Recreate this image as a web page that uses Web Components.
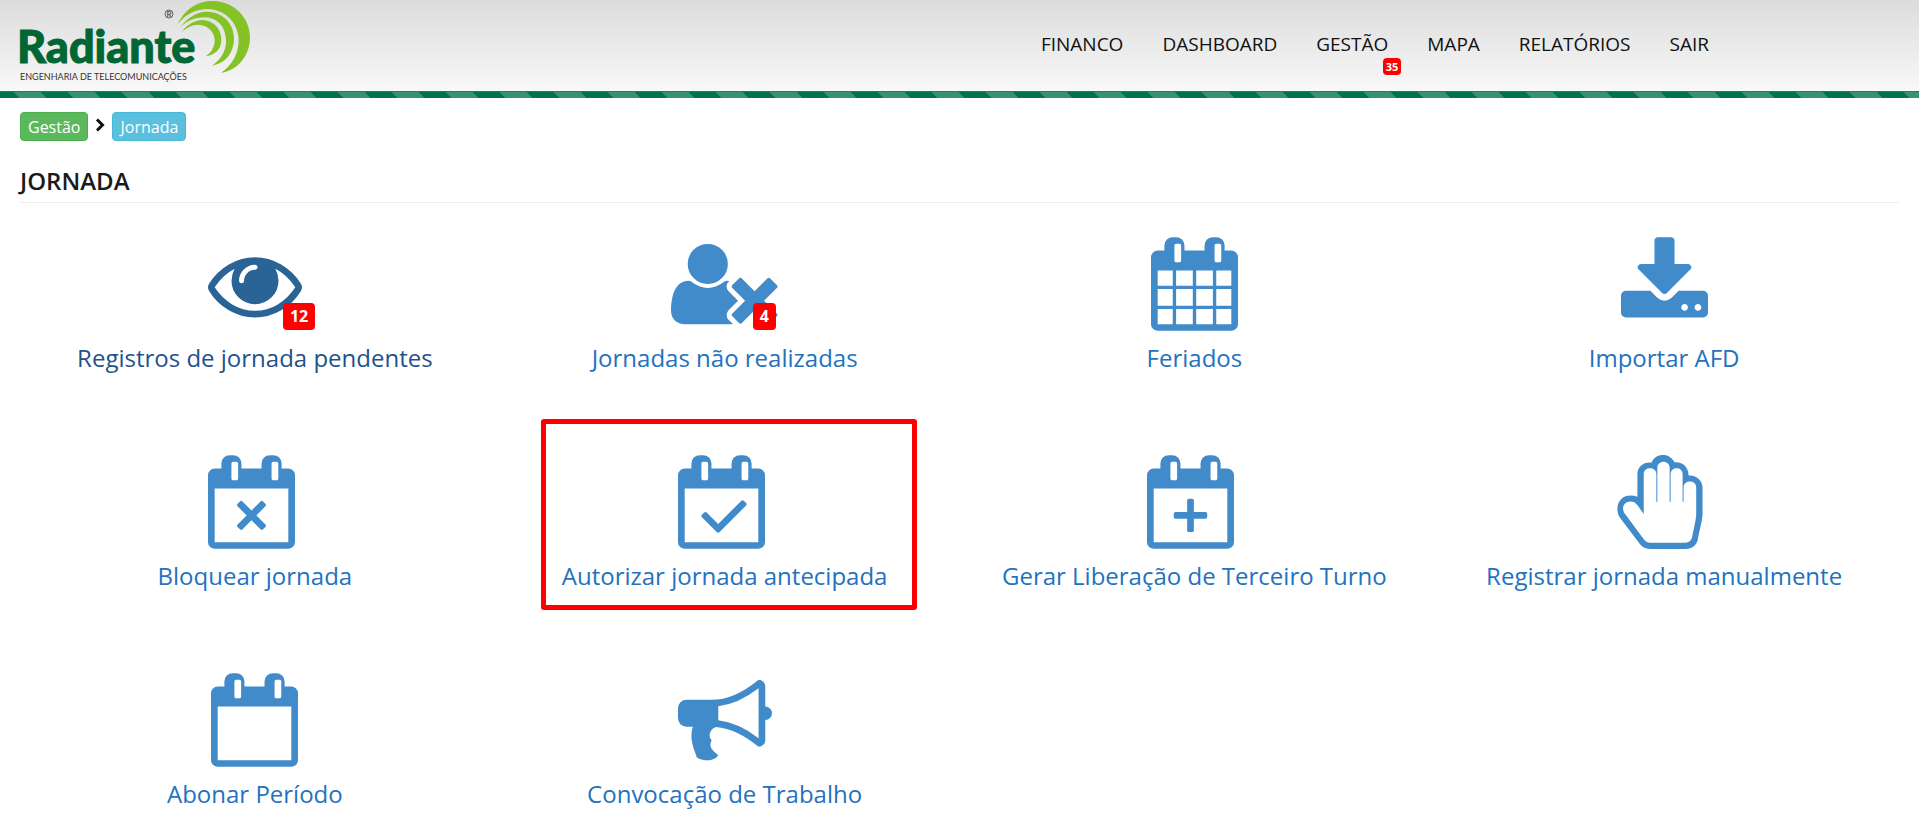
<!DOCTYPE html>
<html lang="pt-BR">
<head>
<meta charset="UTF-8">
<meta name="viewport" content="width=device-width, initial-scale=1.0">
<title>Jornada</title>
<style>
  body {
    margin: 0;
    background: #fff;
    color: #1a1a1a;
    font-family: "Open Sans", "Noto Sans", sans-serif;
  }
</style>
</head>
<body>
<app-header>
  <nav-item href="#financo">FINANCO</nav-item>
  <nav-item href="#dashboard">DASHBOARD</nav-item>
  <nav-item href="#gestao" badge="35">GESTÃO</nav-item>
  <nav-item href="#mapa">MAPA</nav-item>
  <nav-item href="#relatorios">RELATÓRIOS</nav-item>
  <nav-item href="#sair">SAIR</nav-item>
</app-header>

<app-page>
  <bread-crumb slot="crumbs">
    <crumb-link href="#gestao" kind="success">Gestão</crumb-link>
    <crumb-link href="#jornada" kind="info">Jornada</crumb-link>
  </bread-crumb>
  <span slot="title">JORNADA</span>

  <menu-card href="#pendentes" icon="eye" badge="12" active>Registros de jornada pendentes</menu-card>
  <menu-card href="#nao-realizadas" icon="user-times" badge="4">Jornadas não realizadas</menu-card>
  <menu-card href="#feriados" icon="calendar">Feriados</menu-card>
  <menu-card href="#importar" icon="download">Importar AFD</menu-card>
  <menu-card href="#bloquear" icon="calendar-times" spaced>Bloquear jornada</menu-card>
  <menu-card href="#autorizar" icon="calendar-check" spaced marked>Autorizar jornada antecipada</menu-card>
  <menu-card href="#terceiro-turno" icon="calendar-plus" spaced>Gerar Liberação de Terceiro Turno</menu-card>
  <menu-card href="#manual" icon="hand" spaced>Registrar jornada manualmente</menu-card>
  <menu-card href="#abonar" icon="calendar-empty">Abonar Período</menu-card>
  <menu-card href="#convocacao" icon="bullhorn">Convocação de Trabalho</menu-card>
</app-page>

<script>
const CAL_RINGS = "M640 448v-288q0-13-9.500-22.500t-22.500-9.500h-64q-13 0-22.500 9.500t-9.500 22.500v288q0 13 9.500 22.500t22.500 9.500h64q13 0 22.500-9.500t9.500-22.500zM1408 448v-288q0-13-9.500-22.500t-22.500-9.500h-64q-13 0-22.500 9.500t-9.500 22.500v288q0 13 9.500 22.500t22.500 9.500h64q13 0 22.500-9.500t9.500-22.500z";
// shared outline of every calendar: frame + ring holes
const CAL_FRAME = "M1728 384v1280q0 52-38 90t-90 38h-1408q-52 0-90-38t-38-90v-1280q0-52 38-90t90-38h128v-96q0-66 47-113t113-47h64q66 0 113 47t47 113v96h384v-96q0-66 47-113t113-47h64q66 0 113 47t47 113v96h128q52 0 90 38t38 90z" + CAL_RINGS;
const CAL_OPEN = `<path fill-rule="evenodd" d="${CAL_FRAME}M192 1664h1408v-1024h-1408z"/>`;

const ICONS = {
  "eye": {
    box: "0 0 1792 1792", width: 94,
    shape: `<path d="M1664 960q-152-236-381-353 61 104 61 225 0 185-131.500 316.500t-316.500 131.500-316.500-131.500-131.500-316.500q0-121 61-225-229 117-381 353 133 205 333.500 326.500t434.500 121.500 434.500-121.500 333.500-326.500zm-720-384q0-20-14-34t-34-14q-125 0-214.500 89.500t-89.500 214.500q0 20 14 34t34 14 34-14 14-34q0-86 61-147t147-61q20 0 34-14t14-34zm848 384q0 34-20 69-140 230-376.500 368.500t-499.500 138.500-499.500-139-376.500-368q-20-35-20-69t20-69q140-229 376.500-368t499.500-139 499.500 139 376.500 368q20 35 20 69z"/>`
  },
  "user-times": {
    box: "0 0 2048 1792", width: 107,
    shape: `<path d="M704 896q-159 0-271.500-112.500t-112.500-271.500 112.500-271.500 271.500-112.500 271.500 112.500 112.500 271.500-112.500 271.500-271.500 112.500zm1077 320l249 249q9 9 9 23 0 13-9 22l-136 136q-9 9-22 9-14 0-23-9l-249-249-249 249q-9 9-23 9-13 0-22-9l-136-136q-9-9-9-22 0-14 9-23l249-249-249-249q-9-9-9-23 0-13 9-22l136-136q9-9 22-9 14 0 23 9l249 249 249-249q9-9 23-9 13 0 22 9l136 136q9 9 9 22 0 14-9 23zm-498 0l-181 181q-37 37-37 91 0 53 37 90l83 83q-21 3-44 3h-874q-121 0-194-69t-73-190q0-53 3.500-103.500t14-109 26.500-108.500 43-97.500 62-81 85.500-53.500 111.500-20q19 0 39 17 154 122 319 122t319-122q20-17 39-17 28 0 57 6-28 27-41 50t-13 56q0 54 37 91z"/>`
  },
  "calendar": {
    box: "64 0 1664 1792", width: 87,
    shape: `<path fill-rule="evenodd" d="${CAL_FRAME}M192 1664h288v-288h-288zM544 1664h320v-288h-320zM928 1664h320v-288h-320zM1312 1664h288v-288h-288zM192 1312h288v-320h-288zM544 1312h320v-320h-320zM928 1312h320v-320h-320zM1312 1312h288v-320h-288zM192 928h288v-288h-288zM544 928h320v-288h-320zM928 928h320v-288h-320zM1312 928h288v-288h-288z"/>`
  },
  "download": {
    box: "64 0 1664 1792", width: 87,
    shape: `<path d="M1344 1344q0-26-19-45t-45-19-45 19-19 45 19 45 45 19 45-19 19-45zm256 0q0-26-19-45t-45-19-45 19-19 45 19 45 45 19 45-19 19-45zm128-224v320q0 40-28 68t-68 28h-1472q-40 0-68-28t-28-68v-320q0-40 28-68t68-28h465l135 136q58 56 136 56t136-56l136-136h464q40 0 68 28t28 68zm-325-569q17 41-14 70l-448 448q-18 19-45 19t-45-19l-448-448q-31-29-14-70 17-39 59-39h256v-448q0-26 19-45t45-19h256q26 0 45 19t19 45v448h256q42 0 59 39z"/>`
  },
  "calendar-times": {
    box: "64 0 1664 1792", width: 87,
    shape: CAL_OPEN + `<g transform="translate(896 1152) rotate(45)"><rect x="-344" y="-66" width="688" height="132" rx="34"/><rect x="-66" y="-344" width="132" height="688" rx="34"/></g>`
  },
  "calendar-check": {
    box: "64 0 1664 1792", width: 87,
    shape: CAL_OPEN + `<path d="M1367 963l-512 512q-10 9-23 9t-23-9l-288-288q-9-10-9-23t9-23l46-46q9-9 22-9t23 9l220 220 444-444q10-9 23-9t22 9l46 46q9 10 9 23t-9 23z"/>`
  },
  "calendar-plus": {
    box: "64 0 1664 1792", width: 87,
    shape: CAL_OPEN + `<rect x="576" y="1088" width="640" height="128" rx="32"/><rect x="832" y="832" width="128" height="640" rx="32"/>`
  },
  "calendar-empty": {
    box: "64 0 1664 1792", width: 87,
    shape: CAL_OPEN
  },
  "hand": {
    box: "0 0 261 283", width: 87,
    shape: `<path fill-rule="evenodd" d="M61 126V58C61 35 80 20 103 23C110 8 122 0 138 0S165 8 173 22C195 19 215 35 215 62C240 60 257 78 257 98V178C257 190 254 204 243 254C240 272 225 283 207 283H98Q80 283 69 269L9 190C-10 160 5 122 40 122Q52 122 61 126ZM80 178V58C80 34 118 34 118 58V141H121V39C121 14 158 14 158 39V141H161V58C161 34 197 34 197 58V141H200V98C200 74 238 74 238 98V178C238 190 235 204 225 250Q220 264 206 264H97Q88 264 82 256L24 178C10 158 22 140 40 140C50 140 57 145 62 152Z"/>`
  },
  "bullhorn": {
    box: "0 0 1792 1792", width: 94,
    shape: `<path d="M1664 640q53 0 90.500 37.500t37.500 90.500-37.500 90.500-90.500 37.500v384q0 52-38 90t-90 38q-417-347-812-380-58 19-91 66t-31 100.500 40 92.500q-20 33-23 65.500t6 58 33.500 55 48 50 61.500 50.500q-29 58-111.500 83t-168.500 11.500-132-55.500q-7-23-29.500-87.500t-32-94.500-23-89-15-101 3.500-98.500 22-110.500h-122q-66 0-113-47t-47-113v-192q0-66 47-113t113-47h480q435 0 896-384 52 0 90 38t38 90v384zm-128 604v-954q-394 302-768 343v270q377 42 768 341z"/>`
  }
};

class BrandLogo extends HTMLElement {
  constructor() {
    super();
    this.attachShadow({ mode: "open" });
  }

  connectedCallback() {
    this.shadowRoot.innerHTML = /*HTML*/ `
    <style>
      :host { display: block; }
      svg { display: block; }
      .name { font: 900 45px Lato, sans-serif; fill: #006633; stroke: #006633; }
      .tagline { font: 400 9px Lato, sans-serif; fill: #333; }
      .mark { font: 700 8px Lato, sans-serif; fill: #555; }
    </style>
    <svg width="260" height="91" viewBox="0 0 260 91" role="img" aria-label="Radiante">
      <g transform="scale(.3333)" fill="#84c225">
        <path d="M533 72C560 20 600 2 640 3C705 5 750 55 750 112C750 165 715 212 662 219C700 195 717 155 716 118C714 65 672 28 625 27C590 26 560 40 533 72Z"/>
        <path d="M541 82C560 55 590 35 620 35C670 36 702 72 702 115C702 155 680 190 636 197C665 178 680 150 678 118C675 75 650 52 612 52C585 52 560 62 541 82Z"/>
        <path d="M545 97C558 75 585 60 608 60C640 62 664 85 664 120C664 148 645 165 617 169C635 158 645 140 644 118C642 95 625 78 600 75C575 72 560 85 545 97Z"/>
      </g>
      <circle cx="169" cy="14" r="4" fill="none" stroke="#666"/>
      <text class="mark" x="169" y="17" text-anchor="middle">R</text>
      <text class="name" x="17" y="63">Radiante</text>
      <text class="tagline" x="20" y="80">ENGENHARIA DE TELECOMUNICAÇÕES</text>
    </svg>
    `;
  }
}

class NavItem extends HTMLElement {
  constructor() {
    super();
    this.attachShadow({ mode: "open" });
  }

  connectedCallback() {
    const badge = this.getAttribute("badge");
    this.shadowRoot.innerHTML = /*HTML*/ `
    <style>
      :host { display: block; position: relative; }
      a {
        color: #111;
        font-size: 19px;
        line-height: 28px;
        text-decoration: none;
      }
      a:hover { color: #007549; }
      .badge {
        position: absolute;
        top: 28px;
        right: -13px;
        padding: 0 3px;
        border-radius: 4px;
        background: #f00;
        color: #fff;
        font-size: 11px;
        font-weight: 700;
        line-height: 17px;
      }
    </style>
    <a href="${this.getAttribute("href")}"><slot></slot></a>
    ${badge ? `<span class="badge">${badge}</span>` : ""}
    `;
  }
}

class AppHeader extends HTMLElement {
  constructor() {
    super();
    this.attachShadow({ mode: "open" });
  }

  connectedCallback() {
    this.shadowRoot.innerHTML = /*HTML*/ `
    <style>
      :host { display: block; }
      header {
        display: flex;
        justify-content: space-between;
        align-items: flex-start;
        background: linear-gradient(#dcdcdc, #f8f8f8);
      }
      nav {
        display: flex;
        gap: 39px;
        padding: 30px 210px 0 0;
      }
      .stripe {
        height: 7px;
        background-color: #007549;
        background-image: linear-gradient(45deg, #37926f 25%, transparent 25%, transparent 50%, #37926f 50%, #37926f 75%, transparent 75%);
        background-size: 54px 54px;
        background-position: 13px 0;
        box-shadow: inset 0 1px #1f7f5c;
      }
    </style>
    <header>
      <brand-logo></brand-logo>
      <nav><slot></slot></nav>
    </header>
    <div class="stripe"></div>
    `;
  }
}

class BreadCrumb extends HTMLElement {
  constructor() {
    super();
    this.attachShadow({ mode: "open" });
  }

  connectedCallback() {
    this.shadowRoot.innerHTML = /*HTML*/ `
    <style>
      :host { display: block; }
      nav { display: flex; }
    </style>
    <nav aria-label="Navegação"><slot></slot></nav>
    `;
  }
}

class CrumbLink extends HTMLElement {
  constructor() {
    super();
    this.attachShadow({ mode: "open" });
  }

  connectedCallback() {
    this.shadowRoot.innerHTML = /*HTML*/ `
    <style>
      :host { display: flex; }
      svg { display: none; margin: 6px 7px 0; }
      /* chevron only between two crumbs */
      :host(:not(:first-child)) svg { display: block; }
      a {
        padding: 2px 7px 0;
        border: 1px solid #4cae4c;
        border-radius: 4px;
        background: #5cb85c;
        color: #fff;
        font-size: 16px;
        line-height: 25px;
        text-decoration: none;
      }
      :host([kind="info"]) a {
        border-color: #46b8da;
        background: #5bc0de;
      }
    </style>
    <svg width="10" height="14" viewBox="0 0 10 14" fill="none" stroke="#111" stroke-width="3"><path d="M2 1.500L7.500 7L2 12.500"/></svg>
    <a href="${this.getAttribute("href")}"><slot></slot></a>
    `;
  }
}

class AppPage extends HTMLElement {
  constructor() {
    super();
    this.attachShadow({ mode: "open" });
  }

  connectedCallback() {
    this.shadowRoot.innerHTML = /*HTML*/ `
    <style>
      :host { display: block; }
      main { padding: 14px 20px 0; }
      h1 {
        margin: 23px 0 0;
        padding-bottom: 5px;
        border-bottom: 1px solid #eee;
        font-size: 24px;
        font-weight: 600;
        line-height: 33px;
      }
      .grid {
        display: grid;
        grid-template-columns: repeat(4, 1fr);
        row-gap: 47px;
      }
    </style>
    <main>
      <slot name="crumbs"></slot>
      <h1><slot name="title"></slot></h1>
      <div class="grid"><slot></slot></div>
    </main>
    `;
  }
}

class MenuCard extends HTMLElement {
  constructor() {
    super();
    this.attachShadow({ mode: "open" });
  }

  connectedCallback() {
    const icon = ICONS[this.getAttribute("icon")];
    const badge = this.getAttribute("badge");
    this.shadowRoot.innerHTML = /*HTML*/ `
    <style>
      :host {
        display: block;
        position: relative;
        padding-top: 34px;
        text-align: center;
      }
      a {
        color: #2272c0;
        font-size: 24px;
        line-height: 33px;
        text-decoration: none;
      }
      .icon {
        display: flex;
        justify-content: center;
        height: 94px;
        margin-bottom: 10px;
        fill: #428bca;
      }
      .label { display: block; }
      :host([spaced]) .icon { padding-right: 7px; }
      :host([active]) a { color: #1f528c; }
      :host([active]) .icon, a:hover .icon { fill: #2a6496; }
      .badge {
        position: absolute;
        top: 100px;
        left: calc(50% + 28px);
        padding: 0 7px;
        border-radius: 4px;
        background: #f00;
        color: #fff;
        font-size: 16px;
        font-weight: 700;
        line-height: 27px;
      }
      :host([marked])::after {
        content: "";
        position: absolute;
        inset: -2px 43px -18px 51px;
        border: 5px solid #f00;
        border-radius: 3px;
        pointer-events: none;
      }
    </style>
    <a href="${this.getAttribute("href")}">
      <span class="icon"><svg width="${icon.width}" height="94" viewBox="${icon.box}" aria-hidden="true">${icon.shape}</svg></span>
      <span class="label"><slot></slot></span>
      ${badge ? `<span class="badge">${badge}</span>` : ""}
    </a>
    `;
  }
}

customElements.define("brand-logo", BrandLogo);
customElements.define("nav-item", NavItem);
customElements.define("app-header", AppHeader);
customElements.define("bread-crumb", BreadCrumb);
customElements.define("crumb-link", CrumbLink);
customElements.define("app-page", AppPage);
customElements.define("menu-card", MenuCard);
</script>
</body>
</html>
